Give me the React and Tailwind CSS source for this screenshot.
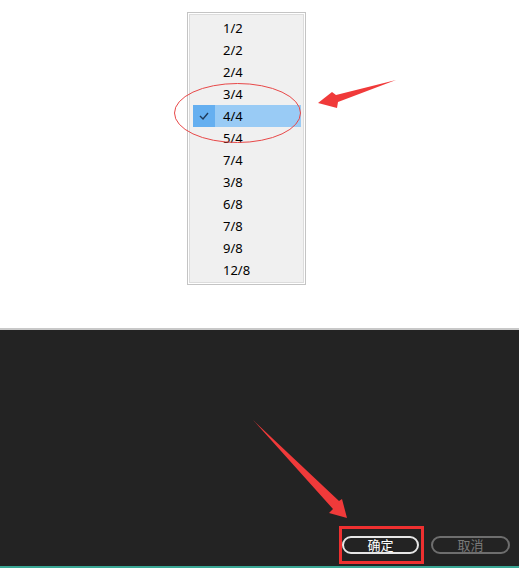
import React from 'react';

const meters = ['1/2', '2/2', '2/4', '3/4', '4/4', '5/4', '7/4', '3/8', '6/8', '7/8', '9/8', '12/8'];

const App = () => {
  const selected = '4/4';

  return (
    <div
      className="relative w-[519px] h-[568px] flex flex-col bg-white overflow-hidden"
      style={{ fontFamily: '"Noto Sans", "Noto Sans CJK SC", sans-serif' }}
    >
      {/* Top: dropdown list */}
      <div className="h-[328px] pt-[12px] pl-[187px]">
        <div className="w-[119px] h-[273px] border border-[#c4c4c4] bg-white p-[1px]">
          <div className="h-full border border-[#dcdcdc] bg-[#f0f0f0] pt-[2px] pl-[3px] pr-[2px]">
            {meters.map((m) => {
              const on = m === selected;
              return (
                <div
                  key={m}
                  className={
                    'flex h-[22px] items-center text-[13px] text-black ' + (on ? 'bg-[#99cbf5]' : '')
                  }
                >
                  <div
                    className={
                      'w-[22px] h-full flex items-center justify-center ' + (on ? 'bg-[#65aff0]' : '')
                    }
                  >
                    {on && (
                      <svg width="10" height="8" viewBox="0 0 10 8">
                        <path d="M1 4 L4 7 L9 1" fill="none" stroke="#1f3a5a" strokeWidth="1.4" />
                      </svg>
                    )}
                  </div>
                  <span className="pl-[8px] leading-none">{m}</span>
                </div>
              );
            })}
          </div>
        </div>
      </div>

      {/* Divider */}
      <div className="h-[2px] bg-[#c8c8c8]" />

      {/* Dark dialog area */}
      <div className="flex-1 bg-[#232323] flex items-end justify-end pr-[9px] pb-[2px]">
        <div className="border-[3px] border-[#ee3030] pt-[7px] pb-[7px] pr-[2px]">
          <button className="w-[77px] h-[18px] rounded-full border-2 border-[#e6e6e6] text-white text-[13px] leading-none flex items-center justify-center">
            确定
          </button>
        </div>
        <div className="ml-[7px] mb-[10px]">
          <button className="w-[79px] h-[18px] rounded-full border-2 border-[#6e6e6e] text-[#7a7a7a] text-[13px] leading-none flex items-center justify-center">
            取消
          </button>
        </div>
      </div>

      {/* Bottom accent line */}
      <div className="h-[2px] bg-[#3aa795]" />

      {/* Annotations */}
      <svg className="absolute inset-0 pointer-events-none" width="519" height="568">
        <ellipse cx="237.5" cy="113" rx="63" ry="29.5" fill="none" stroke="#e84848" strokeWidth="1" />
        <polygon points="396,80 338,102 337,108 318,103 332,92 336,95" fill="#f03a3a" />
        <polygon points="253,420 339,501 342,499 347,518 329,513 333,509" fill="#f03a3a" />
      </svg>
    </div>
  );
};

export default App;
